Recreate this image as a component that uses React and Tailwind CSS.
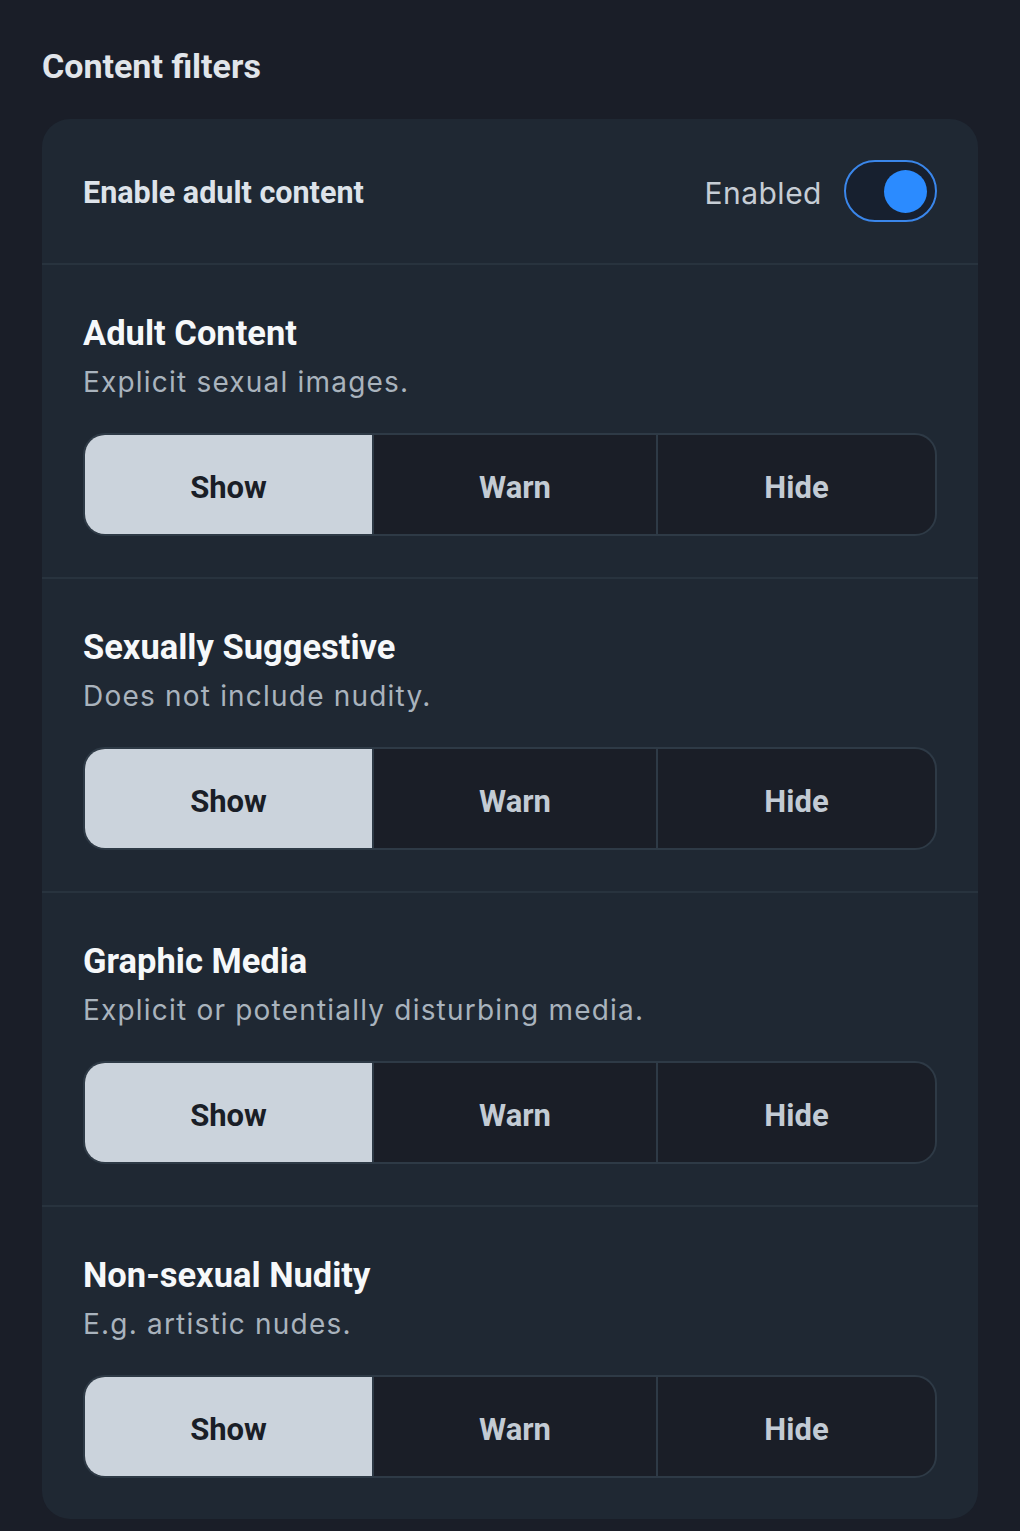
import React, { useState } from 'react';

const filters = [
  { title: 'Adult Content', desc: 'Explicit sexual images.' },
  { title: 'Sexually Suggestive', desc: 'Does not include nudity.' },
  { title: 'Graphic Media', desc: 'Explicit or potentially disturbing media.' },
  { title: 'Non-sexual Nudity', desc: 'E.g. artistic nudes.' },
];

// segment widths follow the reference, the last one takes the rest
const options = [
  { label: 'Show', cls: 'w-[287px]' },
  { label: 'Warn', cls: 'w-[284px] border-l-2 border-[#2e3a46]' },
  { label: 'Hide', cls: 'flex-1 border-l-2 border-[#2e3a46]' },
];

const Segmented = ({ value, onChange }) => (
  <div className="mt-[35px] flex h-[103px] overflow-hidden rounded-[22px] border-2 border-[#2e3a46] bg-[#1a1e27]">
    {options.map((opt) => {
      const active = value === opt.label;
      return (
        <button
          key={opt.label}
          onClick={() => onChange(opt.label)}
          className={
            'flex items-center justify-center pt-[7px] font-["Roboto",sans-serif] text-[31px] font-bold ' +
            opt.cls +
            (active ? ' bg-[#cbd3dc] text-[#1a1e27]' : ' text-[#c3cbd4]')
          }
        >
          {opt.label}
        </button>
      );
    })}
  </div>
);

export default function App() {
  const [enabled, setEnabled] = useState(true);
  const [values, setValues] = useState(filters.map(() => 'Show'));

  return (
    <div className="min-h-[1531px] bg-[#1a1e28] px-[42px] pt-[44px] font-['Inter',sans-serif]">
      <h2 className="font-['Roboto',sans-serif] text-[34px] font-bold leading-[44px] text-[#e1e5ea]">
        Content filters
      </h2>

      <div className="mt-[31px] overflow-hidden rounded-[28px] bg-[#1f2833]">
        {/* toggle row */}
        <div className="flex h-[144px] items-center justify-between px-[41px]">
          <span className="pt-[4px] font-['Roboto',sans-serif] text-[30.5px] font-bold text-[#dde3ea]">
            Enable adult content
          </span>
          <div className="flex items-center gap-[22px]">
            <span className="pt-[4px] text-[30px] tracking-[0.5px] text-[#c6cdd5]">
              {enabled ? 'Enabled' : 'Disabled'}
            </span>
            <button
              onClick={() => setEnabled(!enabled)}
              className="flex h-[62px] w-[93px] items-center rounded-full border-2 border-[#3a86ea] bg-[#17202f] px-[8px]"
            >
              <span
                className={
                  'h-[43px] w-[43px] rounded-full ' +
                  (enabled ? 'ml-auto bg-[#2b8bff]' : 'bg-[#6b7785]')
                }
              />
            </button>
          </div>
        </div>

        {filters.map((f, idx) => (
          <div key={f.title} className="border-t-2 border-[#28333e] px-[41px] pb-[41px] pt-[50px]">
            <div className="font-['Roboto',sans-serif] text-[34.5px] font-bold leading-[36px] text-[#f6f8fa]">
              {f.title}
            </div>
            <div className="mt-[15px] text-[28px] leading-[32px] tracking-[1.2px] text-[#a9b3bd]">
              {f.desc}
            </div>
            <Segmented
              value={values[idx]}
              onChange={(v) => setValues(values.map((x, j) => (j === idx ? v : x)))}
            />
          </div>
        ))}
      </div>
    </div>
  );
}
